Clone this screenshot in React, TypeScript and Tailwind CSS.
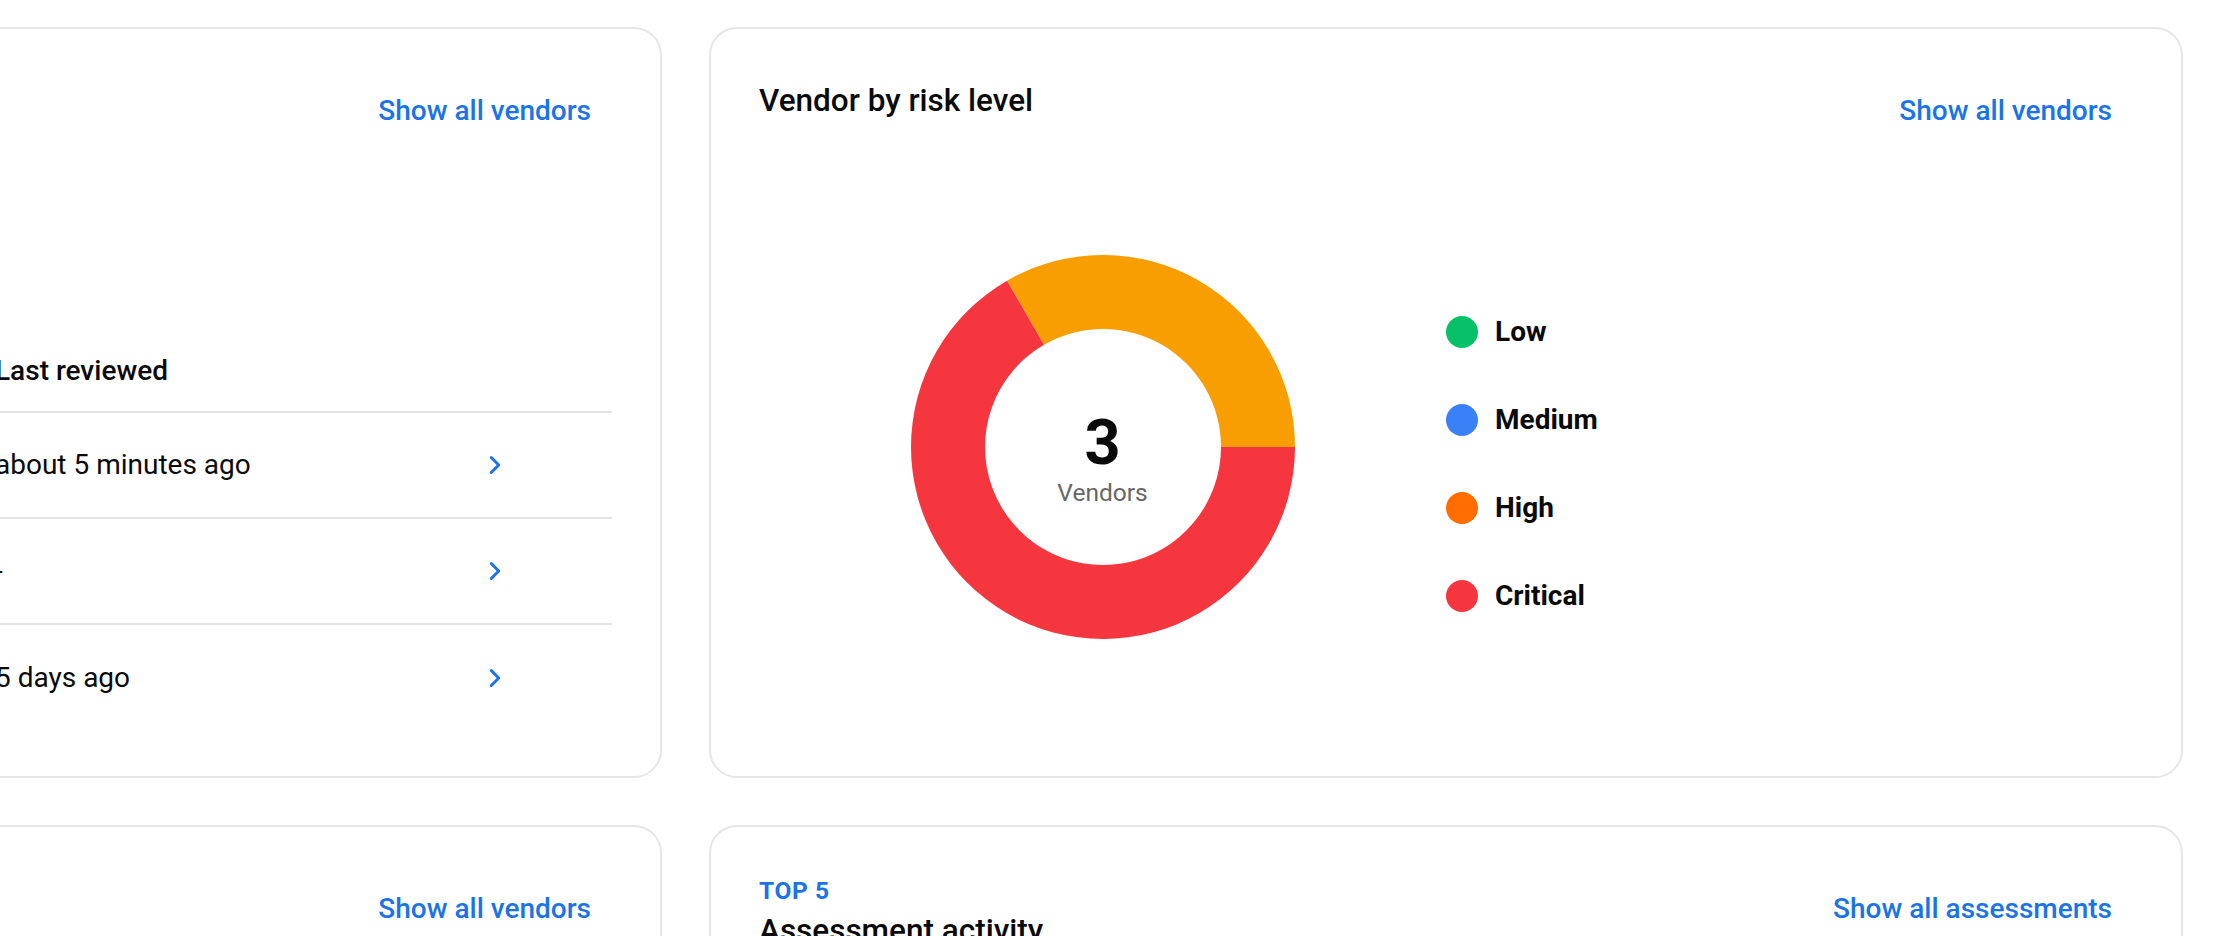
import { ChevronRight } from 'lucide-react';

const vendors = [
  { id: 1, reviewed: 'about 5 minutes ago' },
  { id: 2, reviewed: '-' },
  { id: 3, reviewed: '5 days ago' },
];

const legend = [
  { label: 'Low', color: 'bg-[#06c167]' },
  { label: 'Medium', color: 'bg-[#3a80f6]' },
  { label: 'High', color: 'bg-[#ff6d00]' },
  { label: 'Critical', color: 'bg-[#f5363f]' },
];

function CardHeader({ title, link, eyebrow }: { title?: string; link: string; eyebrow?: string }) {
  return (
    <div className="flex items-start justify-between">
      <div className="flex flex-col">
        {eyebrow && (
          <span className="text-[24.5px] leading-[32px] font-bold text-[#1a73e8] tracking-wide">{eyebrow}</span>
        )}
        {title && <h2 className="text-[31.5px] leading-[47px] font-medium text-[#0a0a0a]">{title}</h2>}
      </div>
      <a className="h-[68px] px-[21px] flex items-center text-[28px] font-medium text-[#1a73e8] cursor-pointer">
        {link}
      </a>
    </div>
  );
}

function Donut() {
  return (
    <div className="relative w-[384px] h-[384px]">
      <svg width="384" height="384" viewBox="0 0 384 384">
        <path d="M384 192 A192 192 0 0 0 96 25.72 L133 89.81 A118 118 0 0 1 310 192 Z" fill="#f89e00" />
        <path d="M96 25.72 A192 192 0 1 0 384 192 L310 192 A118 118 0 1 1 133 89.81 Z" fill="#f5363f" />
      </svg>
      <div className="absolute inset-0 flex flex-col items-center justify-center pt-[28px]">
        <span className="text-[63px] leading-none font-bold text-[#0a0a0a]">3</span>
        <span className="text-[24.5px] leading-[37px] text-[#666666]">Vendors</span>
      </div>
    </div>
  );
}

export default function App() {
  return (
    <div className="h-screen overflow-hidden bg-white font-['Roboto',sans-serif] text-[#0a0a0a]">
      <div className="flex flex-col gap-[47px] pt-[27px] -ml-[400px]">
        <div className="flex gap-[47px]">
          <section className="w-[1062px] h-[751px] shrink-0 rounded-[28px] border-2 border-[#e6e6e6] p-[48px]">
            <CardHeader link="Show all vendors" />
            <div className="mt-[186px]">
              <div className="flex items-center h-[82px] border-b-2 border-[#e3e3e3]">
                <div className="w-[345px]" />
                <div className="flex-1 text-[28px] font-medium">Last reviewed</div>
              </div>
              {vendors.map((v, i) => (
                <div
                  key={v.id}
                  className={`flex items-center h-[106px] ${i < vendors.length - 1 ? 'border-b-2 border-[#e3e3e3]' : ''}`}
                >
                  <div className="w-[345px]" />
                  <div className="flex-1 text-[28px]">{v.reviewed}</div>
                  <div className="w-[30px] flex justify-center text-[#1a73e8]">
                    <ChevronRight size={30} strokeWidth={2.4} />
                  </div>
                  <div className="w-[102px]" />
                </div>
              ))}
            </div>
          </section>

          <section className="w-[1474px] h-[751px] shrink-0 rounded-[28px] border-2 border-[#e6e6e6] p-[48px]">
            <CardHeader title="Vendor by risk level" link="Show all vendors" />
            <div className="grid grid-cols-2 mt-[110px]">
              <div className="flex justify-center">
                <Donut />
              </div>
              <div className="flex flex-col gap-[56px] pt-[61px]">
                {legend.map((l) => (
                  <div key={l.label} className="flex items-center gap-[17px] h-[32px]">
                    <span className={`w-[32px] h-[32px] rounded-full ${l.color}`} />
                    <span className="text-[28px] font-bold">{l.label}</span>
                  </div>
                ))}
              </div>
            </div>
          </section>
        </div>

        <div className="flex gap-[47px]">
          <section className="w-[1062px] h-[600px] shrink-0 rounded-[28px] border-2 border-[#e6e6e6] p-[48px]">
            <CardHeader link="Show all vendors" />
          </section>
          <section className="w-[1474px] h-[600px] shrink-0 rounded-[28px] border-2 border-[#e6e6e6] p-[48px]">
            <CardHeader eyebrow="TOP 5" title="Assessment activity" link="Show all assessments" />
          </section>
        </div>
      </div>
    </div>
  );
}
